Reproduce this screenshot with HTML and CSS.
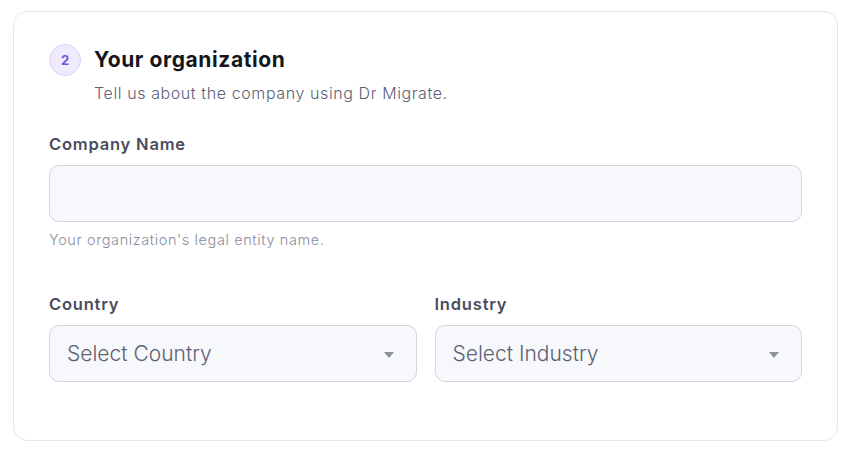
FILE: index.html
```html
<!DOCTYPE html>
<html lang="en">
<head>
<meta charset="utf-8">
<title>Your organization</title>
<link rel="stylesheet" href="styles.css">
</head>
<body>
<section class="card">
  <header class="step-head">
    <span class="step-badge">2</span>
    <div class="step-text">
      <h2 class="step-title">Your organization</h2>
      <p class="step-sub">Tell us about the company using Dr Migrate.</p>
    </div>
  </header>

  <div class="field field-company">
    <label class="field-label" for="company">Company Name</label>
    <input class="text-input" id="company" type="text">
    <p class="field-help">Your organization's legal entity name.</p>
  </div>

  <div class="field-row">
    <div class="field">
      <label class="field-label">Country</label>
      <div class="select">
        <span class="select-text">Select Country</span>
        <span class="select-arrow"></span>
      </div>
    </div>
    <div class="field">
      <label class="field-label">Industry</label>
      <div class="select">
        <span class="select-text">Select Industry</span>
        <span class="select-arrow"></span>
      </div>
    </div>
  </div>
</section>
</body>
</html>
```

FILE: styles.css
```css
* { box-sizing: border-box; }

html, body {
  margin: 0;
  background: #ffffff;
}

body {
  padding: 11px 15px 9px 13px;
  font-family: "Inter", "Open Sans", sans-serif;
}

.card {
  height: 430px;
  border: 1px solid #e6e7eb;
  border-radius: 14px;
  padding: 32px 35px;
  background: #fff;
}

.step-head {
  display: flex;
  gap: 13px;
  align-items: flex-start;
}

.step-badge {
  flex: none;
  width: 32px;
  height: 32px;
  border-radius: 50%;
  background: #efebfd;
  border: 1px solid #dcd3f8;
  color: #6b5bd6;
  font-size: 13px;
  font-weight: 700;
  display: flex;
  align-items: center;
  justify-content: center;
}

.step-title {
  margin: 0;
  font-size: 21px;
  line-height: 32px;
  font-weight: 700;
  letter-spacing: 0.6px;
  color: #15151c;
}

.step-sub {
  margin: 6px 0 0;
  font-size: 16px;
  line-height: 22px;
  font-weight: 300;
  letter-spacing: 0.6px;
  color: #5b5f78;
}

.field {
  display: flex;
  flex-direction: column;
}

.field-company {
  margin-top: 29px;
}

.field-label {
  font-size: 16.5px;
  line-height: 22px;
  font-weight: 600;
  letter-spacing: 0.8px;
  color: #4a4d5c;
  margin-bottom: 10px;
}

.text-input {
  height: 57px;
  border: 1px solid #d3d5df;
  border-radius: 10px;
  background: #f7f8fc;
  font: inherit;
  outline: none;
}

.field-help {
  margin: 8px 0 0;
  font-size: 14.5px;
  line-height: 20px;
  font-weight: 300;
  letter-spacing: 0.6px;
  color: #8b8e9c;
}

.field-row {
  display: grid;
  grid-template-columns: 1fr 1fr;
  gap: 18px;
  margin-top: 43px;
}

.select {
  height: 57px;
  border: 1px solid #d3d5df;
  border-radius: 10px;
  background: #f7f8fc;
  display: flex;
  align-items: center;
  justify-content: space-between;
  padding: 0 22px 0 17px;
}

.select-text {
  font-size: 21px;
  font-weight: 300;
  color: #5d6073;
}

.select-arrow {
  width: 0;
  height: 0;
  border-left: 5px solid transparent;
  border-right: 5px solid transparent;
  border-top: 6px solid #8e91a0;
  margin-top: 3px;
}
```
